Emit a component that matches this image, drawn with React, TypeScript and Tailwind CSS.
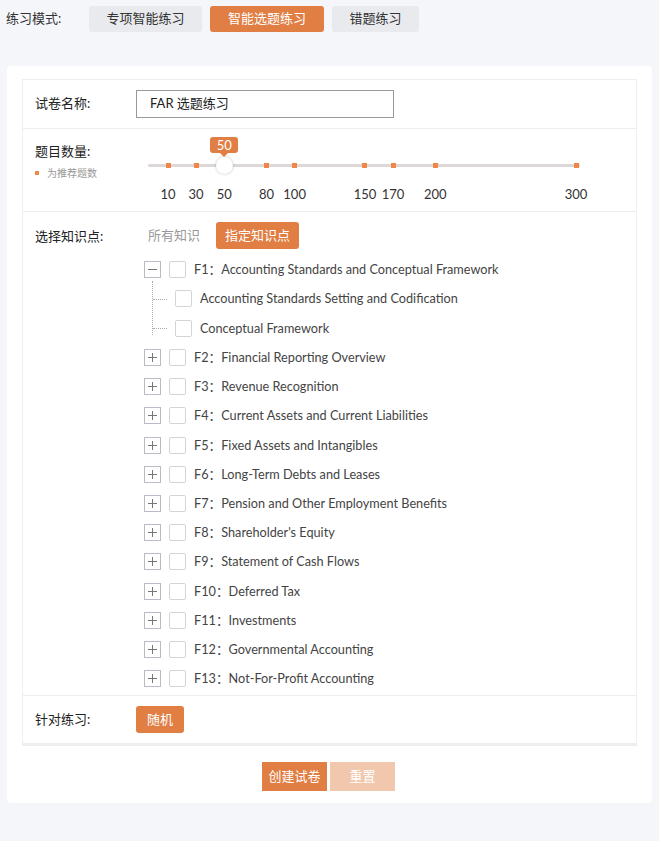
import React from "react";

const marks = [10, 30, 50, 80, 100, 150, 170, 200, 300];
const pos = (v: number) => 20 + (v - 10) * (408 / 290);

const tree = [
  "F2：Financial Reporting Overview",
  "F3：Revenue Recognition",
  "F4：Current Assets and Current Liabilities",
  "F5：Fixed Assets and Intangibles",
  "F6：Long-Term Debts and Leases",
  "F7：Pension and Other Employment Benefits",
  "F8：Shareholder's Equity",
  "F9：Statement of Cash Flows",
  "F10：Deferred Tax",
  "F11：Investments",
  "F12：Governmental Accounting",
  "F13：Not-For-Profit Accounting",
];

function Box() {
  return <span className="inline-block w-[17px] h-[17px] border border-[#d4d4d4] rounded-[2px] bg-white shrink-0" />;
}

function Toggle({ open }: { open?: boolean }) {
  return (
    <span className="relative inline-block w-[17px] h-[17px] border border-[#b9bcc6] bg-white shrink-0">
      <span className="absolute left-[3px] right-[3px] top-[7px] h-px bg-[#777]" />
      {!open && <span className="absolute top-[3px] bottom-[3px] left-[7px] w-px bg-[#777]" />}
    </span>
  );
}

export default function App() {
  const font = { fontFamily: 'Lato, "Noto Sans CJK SC", sans-serif' };
  return (
    <div className="min-h-[841px] bg-[#f5f6fa] text-[13px] text-[#222]" style={font}>
      <div className="flex items-center h-[38px] pt-[6px] pb-[6px] pl-[6px]">
        <span className="w-[83px] text-[#333]">练习模式:</span>
        <div className="flex gap-2">
          <button className="h-[26px] w-[113px] rounded-[3px] bg-[#e8eaee] text-[#333]">专项智能练习</button>
          <button className="h-[26px] w-[114px] rounded-[3px] bg-[#e07e43] text-white">智能选题练习</button>
          <button className="h-[26px] w-[87px] rounded-[3px] bg-[#e8eaee] text-[#333]">错题练习</button>
        </div>
      </div>
      <div className="mt-[28px] mx-[7px] w-[645px] bg-white rounded-[4px] pt-[13px] pb-[12px] px-[15px]">
        <div className="border border-[#eeeeee]">
          {/* row 1 */}
          <div className="flex items-center h-[49px] border-b border-[#eeeeee]">
            <div className="w-[113px] pl-[12px]">试卷名称:</div>
            <div className="w-[258px] h-[28px] border border-[#999] flex items-center pl-[13px] text-[#222]">FAR 选题练习</div>
          </div>
          {/* row 2 */}
          <div className="flex h-[83px] border-b border-[#eeeeee]">
            <div className="w-[113px] pl-[12px] pt-[13px]">
              <div>题目数量:</div>
              <div className="flex items-center mt-[4px] text-[10px] text-[#999]">
                <span className="w-[4px] h-[4px] bg-[#f0874a] mr-[8px]" />
                为推荐题数
              </div>
            </div>
            <div className="relative flex-1">
              <div className="absolute left-[12px] w-[432px] top-[35px] h-[3px] bg-[#dcd8d8] rounded" />
              {marks.map((m) => (
                <React.Fragment key={m}>
                  {m !== 50 && (
                    <span
                      className="absolute top-[34px] w-[5px] h-[5px] bg-[#f0874a]"
                      style={{ left: pos(m) + 12 - 2.5 }}
                    />
                  )}
                  <span
                    className="absolute top-[56px] text-[13px] text-[#333] -translate-x-1/2"
                    style={{ left: pos(m) + 12 }}
                  >
                    {m}
                  </span>
                </React.Fragment>
              ))}
              <span
                className="absolute top-[28px] w-[17px] h-[17px] rounded-full bg-white shadow-[0_0_3px_rgba(0,0,0,0.25)]"
                style={{ left: pos(50) + 12 - 8.5 }}
              />
              <span
                className="absolute top-[8px] w-[28px] h-[16px] rounded-[3px] bg-[#e07e43] text-white text-[13px] leading-[16px] text-center"
                style={{ left: pos(50) + 12 - 14 }}
              >
                50
                <span className="absolute left-[10px] top-[16px] w-0 h-0 border-l-[4px] border-r-[4px] border-t-[4px] border-l-transparent border-r-transparent border-t-[#e07e43]" />
              </span>
            </div>
          </div>
          {/* row 3 */}
          <div className="flex border-b border-[#eeeeee] pt-[10px] pb-[2px]">
            <div className="w-[113px] pl-[12px] pt-[5px]">选择知识点:</div>
            <div className="flex-1">
              <div className="flex items-center h-[27px]">
                <span className="ml-[12px] text-[#999]">所有知识</span>
                <button className="ml-[16px] h-[27px] w-[83px] rounded-[3px] bg-[#e07e43] text-white">指定知识点</button>
              </div>
              <div className="mt-[6px] ml-[8px] text-[#444] text-[12.7px]">
                <div className="flex items-center h-[29px] gap-[8px]">
                  <Toggle open />
                  <Box />
                  <span>F1：Accounting Standards and Conceptual Framework</span>
                </div>
                <div className="relative pl-[31px]">
                  <span className="absolute left-[8px] top-[-3px] h-[54px] border-l border-dotted border-[#aaa]" />
                  <span className="absolute left-[9px] top-[15px] w-[14px] border-t border-dotted border-[#aaa]" />
                  <span className="absolute left-[9px] top-[44px] w-[14px] border-t border-dotted border-[#aaa]" />
                  <div className="flex items-center h-[29.5px] gap-[8px]">
                    <Box />
                    <span>Accounting Standards Setting and Codification</span>
                  </div>
                  <div className="flex items-center h-[29.5px] gap-[8px]">
                    <Box />
                    <span>Conceptual Framework</span>
                  </div>
                </div>
                {tree.map((t) => (
                  <div key={t} className="flex items-center h-[29.2px] gap-[8px]">
                    <Toggle />
                    <Box />
                    <span>{t}</span>
                  </div>
                ))}
              </div>
            </div>
          </div>
          {/* row 4 */}
          <div className="flex items-center h-[49px] border-b-2 border-[#eeeeee]">
            <div className="w-[113px] pl-[12px]">针对练习:</div>
            <button className="h-[27px] w-[48px] rounded-[3px] bg-[#e07e43] text-white">随机</button>
          </div>
        </div>
        <div className="flex justify-center gap-[3px] mt-[16px] pr-[2px]">
          <button className="h-[29px] w-[65px] bg-[#e07e43] text-white">创建试卷</button>
          <button className="h-[29px] w-[65px] bg-[#f1c7ae] text-white">重置</button>
        </div>
      </div>
    </div>
  );
}
